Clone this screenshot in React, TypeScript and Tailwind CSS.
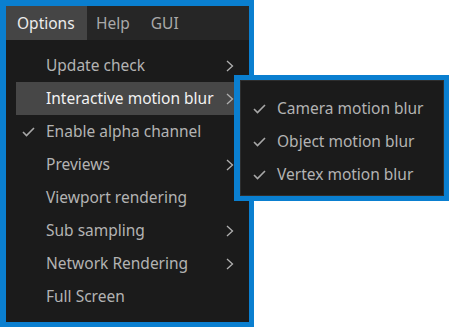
import React from 'react';

const ITEMS: { label: string; sub?: boolean; checked?: boolean; active?: boolean }[] = [
  { label: 'Update check', sub: true },
  { label: 'Interactive motion blur', sub: true, active: true },
  { label: 'Enable alpha channel', checked: true },
  { label: 'Previews', sub: true },
  { label: 'Viewport rendering' },
  { label: 'Sub sampling', sub: true },
  { label: 'Network Rendering', sub: true },
  { label: 'Full Screen' },
];

const SUB = ['Camera motion blur', 'Object motion blur', 'Vertex motion blur'];

function Check() {
  return (
    <svg width="13" height="10" viewBox="0 0 13 10" className="shrink-0">
      <polyline points="1,5 4.5,8.5 12,1" fill="none" stroke="currentColor" strokeWidth="1.6" />
    </svg>
  );
}

function Chevron() {
  return (
    <svg width="8" height="12" viewBox="0 0 8 12" className="shrink-0">
      <polyline points="1,1 6.5,6 1,11" fill="none" stroke="currentColor" strokeWidth="1.3" />
    </svg>
  );
}

export default function App() {
  return (
    <div className="relative w-[453px] h-[329px] bg-white" style={{ fontFamily: '"Noto Sans", "Open Sans", sans-serif' }}>
      <div className="w-[254px] h-[327px] border-t-[6px] border-l-[6px] border-r-[5px] border-b-[5px] border-[#0a7fd0] bg-[#1b1b1b] flex flex-col">
        <div className="h-[34px] bg-[#262626] flex items-stretch text-[15.5px] pt-[2px]">
          <div className="w-[81px] -mt-[2px] pt-[2px] bg-[#454545] text-[#ececec] flex items-center pl-[11px]">Options</div>
          <div className="text-[#a9a9a9] flex items-center pl-[9px]">Help</div>
          <div className="text-[#a9a9a9] flex items-center pl-[21px]">GUI</div>
        </div>
        <div className="pt-[9px] px-[10px]">
          {ITEMS.map(it => (
            <div key={it.label}
              className={'h-[33px] flex items-center text-[15.5px] pt-[1px] ' + (it.active ? 'bg-[#474747] text-[#f2f2f2]' : 'text-[#b3b3b3]')}>
              <div className="w-[30px] pl-[6px] flex items-center text-[#a8a8a8]">{it.checked && <Check />}</div>
              <div className="flex-1">{it.label}</div>
              <div className="w-[18px] flex items-center justify-end pr-[5px] text-[#b0b0b0]">{it.sub && <Chevron />}</div>
            </div>
          ))}
        </div>
      </div>

      <div className="absolute left-[234px] top-[75px] w-[215px] h-[126px] border-[5px] border-l-[6px] border-[#0a7fd0]">
        <div className="h-full bg-[#1b1b1b] border border-[#2e2e2e] pt-[11px]">
          {SUB.map(s => (
            <div key={s} className="h-[33px] flex items-center text-[15.5px] pt-[1px] text-[#b3b3b3]">
              <div className="w-[36px] pl-[12px] flex items-center text-[#a8a8a8]"><Check /></div>
              <div>{s}</div>
            </div>
          ))}
        </div>
      </div>
    </div>
  );
}
